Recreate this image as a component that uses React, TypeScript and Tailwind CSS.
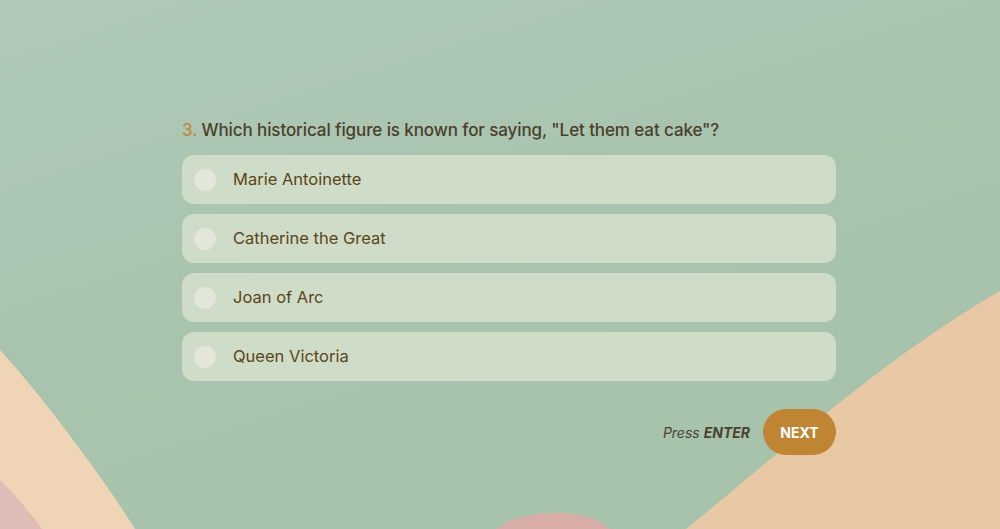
import { useState } from "react";

const options = ["Marie Antoinette", "Catherine the Great", "Joan of Arc", "Queen Victoria"];

const Backdrop = () => (
  <svg
    className="absolute inset-0 w-full h-full"
    viewBox="0 0 1000 529"
    preserveAspectRatio="none"
  >
    <defs>
      <linearGradient id="bg" x1="0" y1="0" x2="0.6" y2="1">
        <stop offset="0" stopColor="#b0c9b9" />
        <stop offset="0.5" stopColor="#a8c4ae" />
        <stop offset="1" stopColor="#a7c3ab" />
      </linearGradient>
    </defs>
    <rect width="1000" height="529" fill="url(#bg)" />
    {/* left beige */}
    <path d="M0 350 C30 382 95 465 135 529 L0 529 Z" fill="#efd5b5" />
    <path d="M0 480 C15 495 30 512 42 529 L0 529 Z" fill="#dfbcb6" />
    {/* right beige */}
    <path d="M686 529 C770 462 880 360 1000 291 L1000 529 Z" fill="#e9c9a5" />
    {/* bottom pink */}
    <path d="M496 529 C520 510 585 505 610 529 Z" fill="#d9aea9" />
  </svg>
);

export default function App() {
  const [picked, setPicked] = useState<number | null>(null);

  return (
    <div
      className="relative w-full h-[529px] overflow-hidden"
      style={{ fontFamily: "Inter, 'Noto Sans', sans-serif" }}
    >
      <Backdrop />
      <div className="relative flex flex-col w-[654px] ml-[182px] pt-[119px]">
        <h2 className="text-[17px] font-medium text-[#4b3f2b] tracking-[-0.1px] leading-[22px]">
          <span className="text-[#c08a3a]">3.</span> Which historical figure is known for saying, "Let them eat cake"?
        </h2>

        <div className="flex flex-col gap-[10px] mt-[14px]">
          {options.map((opt, i) => (
            <button
              key={opt}
              onClick={() => setPicked(i)}
              className="flex items-center h-[49px] rounded-[12px] bg-[#cfdcc7] pl-[12px] text-left"
            >
              <span
                className={
                  picked === i
                    ? "w-[22px] h-[22px] rounded-full bg-[#c08a3a]"
                    : "w-[22px] h-[22px] rounded-full bg-[#e2e7d8]"
                }
              />
              <span className="ml-[17px] text-[16.5px] text-[#5b4519]">{opt}</span>
            </button>
          ))}
        </div>

        <div className="flex items-center justify-end gap-[13px] mt-[28px]">
          <span className="italic text-[14px] text-[#4a4232]">
            Press <b className="font-bold">ENTER</b>
          </span>
          <button className="w-[73px] h-[46px] rounded-full bg-[#bf8533] text-white text-[14px] font-bold">
            NEXT
          </button>
        </div>
      </div>
    </div>
  );
}
